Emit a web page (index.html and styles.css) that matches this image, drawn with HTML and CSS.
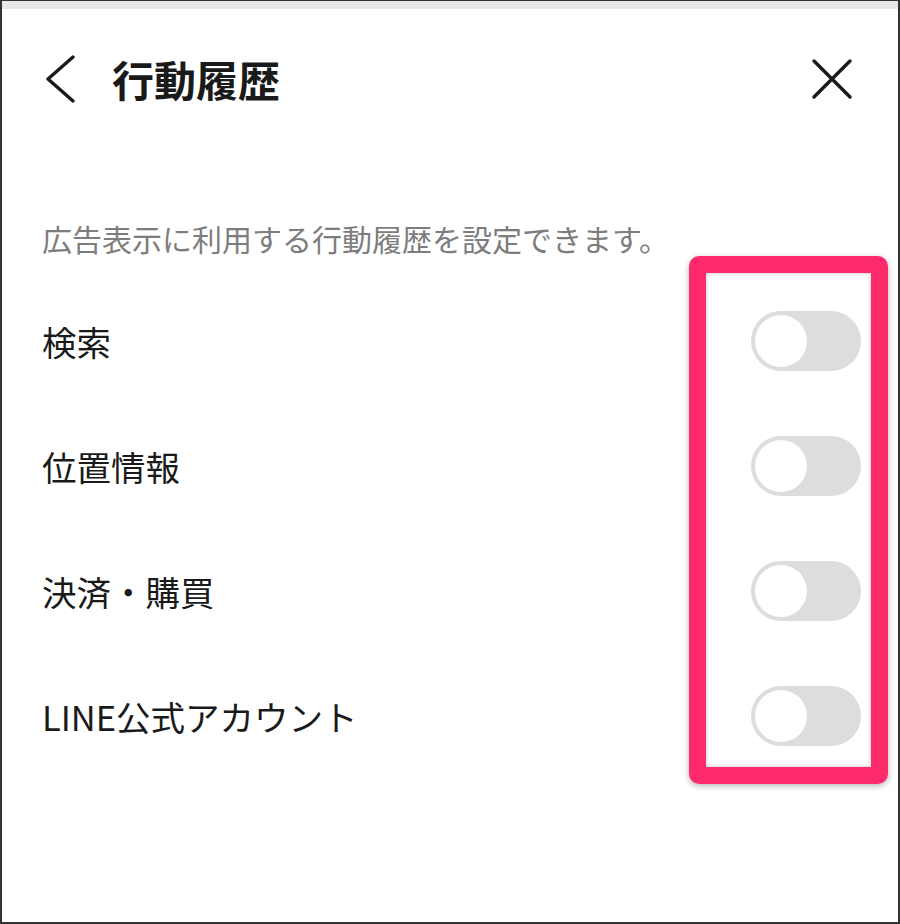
FILE: index.html
```html
<!DOCTYPE html>
<html lang="ja">
<head>
    <meta charset="UTF-8">
    <title>行動履歴</title>
    <meta name="viewport" content="width=device-width, initial-scale=1">
    <link rel="stylesheet" href="styles.css">
</head>
<body>
    <div class="frame">
        <div class="topbar"></div>
        <div class="header">
            <svg class="back" width="30" height="48" viewBox="0 0 30 48">
                <polyline points="27,2 2,24 27,46" fill="none" stroke="#1a1a1a" stroke-width="3.4" stroke-linecap="round" stroke-linejoin="round"/>
            </svg>
            <h1 class="title">行動履歴</h1>
            <svg class="close" width="42" height="42" viewBox="0 0 42 42">
                <path d="M3 3 L39 39 M39 3 L3 39" fill="none" stroke="#1a1a1a" stroke-width="3.4" stroke-linecap="round"/>
            </svg>
        </div>

        <p class="desc">広告表示に利用する行動履歴を設定できます。</p>

        <div class="list">
            <div class="row">
                <div class="label">検索</div>
                <div class="toggle"><div class="knob"></div></div>
            </div>
            <div class="row">
                <div class="label">位置情報</div>
                <div class="toggle"><div class="knob"></div></div>
            </div>
            <div class="row">
                <div class="label">決済・購買</div>
                <div class="toggle"><div class="knob"></div></div>
            </div>
            <div class="row">
                <div class="label">LINE公式アカウント</div>
                <div class="toggle"><div class="knob"></div></div>
            </div>
        </div>

        <div class="highlight"></div>
    </div>
</body>
</html>
```

FILE: styles.css
```css
body {
    margin: 0;
    font-family: "Noto Sans CJK JP", "Noto Sans", sans-serif;
    background: #ffffff;
}
.frame {
    position: relative;
    width: 900px;
    height: 924px;
    box-sizing: border-box;
    border: 2px solid #333333;
    border-top-width: 1px;
    background: #ffffff;
}
.topbar {
    height: 8px;
    background: #e8e8e8;
}
.header {
    display: flex;
    align-items: center;
    height: 140px;
    padding: 0 45px 0 44px;
}
.back {
    display: block;
}
.title {
    margin: 0 0 0 36px;
    font-size: 42px;
    font-weight: bold;
    color: #1a1a1a;
    line-height: 1;
}
.close {
    display: block;
    margin-left: auto;
}
.desc {
    margin: 69px 0 0 40px;
    font-size: 30px;
    line-height: 40px;
    color: #7d7d7d;
}
.list {
    margin-top: 20px;
    padding: 0 37px 0 40px;
}
.row {
    display: flex;
    align-items: center;
    justify-content: space-between;
    height: 125px;
}
.label {
    font-size: 34.5px;
    color: #1a1a1a;
}
.toggle {
    width: 110px;
    height: 60px;
    border-radius: 30px;
    background: #dddddd;
    padding: 4px;
    box-sizing: border-box;
}
.knob {
    width: 52px;
    height: 52px;
    border-radius: 50%;
    background: #ffffff;
}
.highlight {
    position: absolute;
    left: 687px;
    top: 255px;
    width: 199px;
    height: 528px;
    box-sizing: border-box;
    border: 17px solid #fd2a6c;
    border-radius: 10px;
    box-shadow: 0 2px 6px rgba(0,0,0,0.3), inset 0 0 4px rgba(0,0,0,0.25);
}
```
